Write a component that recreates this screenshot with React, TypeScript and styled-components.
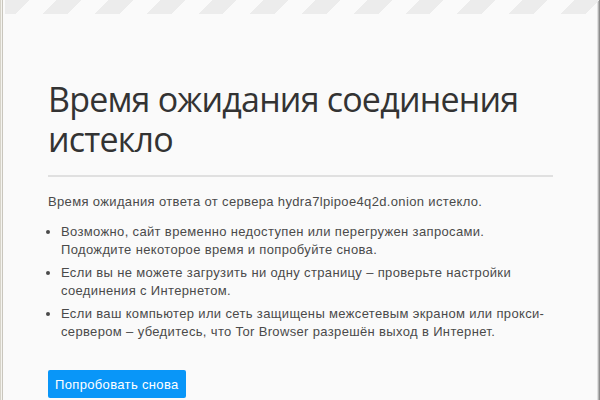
import React from 'react';
import styled, { createGlobalStyle } from 'styled-components';

const GlobalStyle = createGlobalStyle`
  html, body {
    margin: 0;
    padding: 0;
    background: #fafafa;
  }
  #root {
    height: 400px;
  }
`;

const Window = styled.div`
  height: 400px;
  box-sizing: border-box;
  display: flex;
  flex-direction: column;
  background: #fafafa;
  border-left: 1px solid #d6d3c9;
  border-right: 1px solid #8c8c8c;
  box-shadow: inset 1px 0 0 #f4f3ee, inset 2px 0 0 #c9c6bd, inset -1px 0 0 #b5b5b5, inset -2px 0 0 #e0e0e0;
  overflow: hidden;
`;

const Stripes = styled.div`
  height: 14px;
  flex: none;
  background: repeating-linear-gradient(
    135deg,
    #ececec 0,
    #ececec 17.5px,
    transparent 17.5px,
    transparent 36.6px
  );
  background-position: 4px 0;
`;

const Container = styled.main`
  width: 505px;
  margin-left: 47px;
  padding-top: 65px;
  color: #333;
  font-family: "Liberation Sans", Arial, sans-serif;
`;

const Title = styled.h1`
  margin: 0;
  padding-bottom: 16px;
  border-bottom: 2px solid #e0e0e0;
  font-family: "Open Sans", sans-serif;
  font-weight: 400;
  font-size: 34px;
  letter-spacing: -0.8px;
  line-height: 40px;
  color: #333;
`;

const Lead = styled.p`
  margin: 16px 0 12px;
  font-size: 13px;
  letter-spacing: 0.35px;
  line-height: 18px;
  color: #4a4a4a;
`;

const List = styled.ul`
  margin: 0;
  padding: 0 0 0 13px;
  font-size: 13px;
  letter-spacing: 0.35px;
  line-height: 18px;
  color: #4a4a4a;
`;

const Item = styled.li`
  margin-bottom: 5px;
`;

const RetryButton = styled.button`
  margin-top: 24px;
  height: 28px;
  padding: 0 7px;
  border: none;
  border-radius: 2px;
  background: #0996f8;
  color: #fff;
  font-family: "Liberation Sans", Arial, sans-serif;
  font-size: 13px;
  letter-spacing: 0.35px;
  cursor: pointer;
`;

export default function App() {
  return (
    <>
      <GlobalStyle />
      <Window>
        <Stripes />
        <Container>
          <Title>Время ожидания соединения истекло</Title>
          <Lead>Время ожидания ответа от сервера hydra7lpipoe4q2d.onion истекло.</Lead>
          <List>
            <Item>Возможно, сайт временно недоступен или перегружен запросами. Подождите некоторое время и попробуйте снова.</Item>
            <Item>Если вы не можете загрузить ни одну страницу – проверьте настройки соединения с Интернетом.</Item>
            <Item>Если ваш компьютер или сеть защищены межсетевым экраном или прокси-сервером – убедитесь, что Tor Browser разрешён выход в Интернет.</Item>
          </List>
          <RetryButton>Попробовать снова</RetryButton>
        </Container>
      </Window>
    </>
  );
}
